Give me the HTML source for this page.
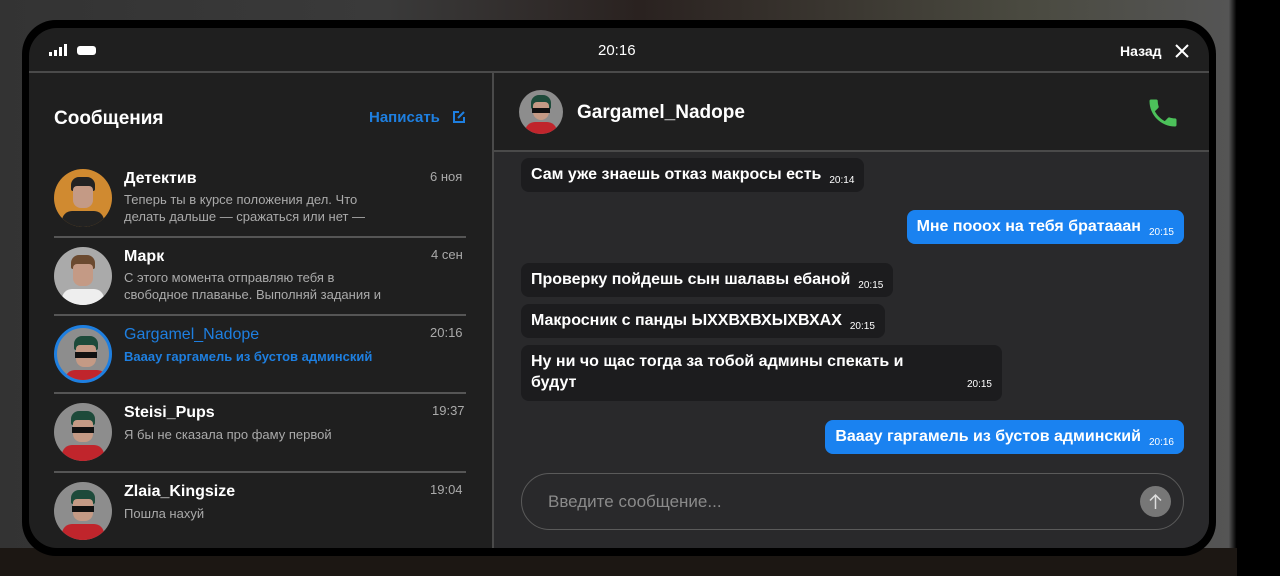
<!DOCTYPE html>
<html><head><meta charset="utf-8"><style>
*{margin:0;padding:0;box-sizing:border-box}
body{width:1280px;height:576px;overflow:hidden;position:relative;font-family:"Liberation Sans","DejaVu Sans",sans-serif;background:#2b2b2b}
.bg{position:absolute;inset:0;background:linear-gradient(90deg,#333 0%,#3a3a3a 30%,#2a2220 50%,#4a4a40 80%,#555 96%,#000 96.6%)}
.bot{position:absolute;left:0;right:43px;top:548px;bottom:0;background:#1c1713}
.frame{position:absolute;left:22px;top:20px;width:1194px;height:536px;background:#000;border-radius:34px}
.screen{position:absolute;left:29px;top:28px;width:1180px;height:520px;background:#1f1f1f;border-radius:28px;overflow:hidden}
.top{position:absolute;left:0;top:0;width:100%;height:45px;border-bottom:2px solid #4a4a4a}
.right{position:absolute;left:463px;top:45px;right:0;bottom:0;background:#29292b;border-left:2px solid #4a4a4a}
.t{position:absolute;white-space:nowrap;color:#fff}
.av{position:absolute;width:58px;height:58px;border-radius:50%;background:#8d8d8d;overflow:hidden}
.av i{position:absolute;left:17px;top:8px;width:24px;height:14px;background:#1d4a3a;border-radius:8px 8px 2px 2px}
.av b{position:absolute;left:19px;top:17px;width:20px;height:22px;background:#c49a85;border-radius:4px 4px 8px 8px}
.av s{position:absolute;left:18px;top:24px;width:22px;height:6px;background:#111}
.av u{position:absolute;left:8px;top:42px;width:42px;height:20px;background:#c0252c;border-radius:10px 10px 0 0}
.sep{position:absolute;left:25px;width:412px;height:2px;background:#555}
.nm{font-size:16px;font-weight:bold}
.pv{font-size:13px;color:#aaa;line-height:17px}
.tm{font-size:13px;color:#aaa}
.b{position:absolute;background:#1c1c1e;border-radius:8px;color:#fff;font-size:16px;font-weight:bold;padding:8px 10px;white-space:nowrap}
.b small{font-size:10px;font-weight:normal;margin-left:8px;position:relative;top:4px}
.me{background:#1a82f0}
</style></head><body>
<div class="bg"></div><div class="bot"></div>
<div class="frame"></div>
<div class="screen">
 <div class="top">
  <svg style="position:absolute;left:20px;top:16px" width="52" height="12"><rect x="0" y="8" width="3" height="4" fill="#fff"/><rect x="5" y="6" width="3" height="6" fill="#fff"/><rect x="10" y="3" width="3" height="9" fill="#fff"/><rect x="15" y="0" width="3" height="12" fill="#fff"/><rect x="28" y="2" width="19" height="9" rx="3" fill="#fff"/></svg>
  <div class="t" style="left:569px;top:14px;font-size:15px">20:16</div>
  <div class="t" style="left:1091px;top:15px;font-size:14px;font-weight:bold">Назад</div>
  <svg style="position:absolute;left:1146px;top:16px" width="14" height="14"><path d="M1 1L13 13M13 1L1 13" stroke="#fff" stroke-width="2"/></svg>
 </div>
 <div class="t" style="left:25px;top:80px;font-size:19px;font-weight:bold">Сообщения</div>
 <div class="t" style="left:340px;top:81px;font-size:15px;font-weight:bold;color:#1e7fe0">Написать</div>
 <svg style="position:absolute;left:423px;top:82px" width="14" height="14"><path d="M7 2H2V12H12V7" stroke="#1e7fe0" stroke-width="2" fill="none"/><path d="M6 8L12 2" stroke="#1e7fe0" stroke-width="2"/></svg>

 <div class="av" style="left:25px;top:141px;background:#d08a30"><i style="background:#222"></i><b></b><u style="background:#222"></u></div>
 <div class="t nm" style="left:95px;top:142px">Детектив</div><div class="t tm" style="left:401px;top:141px">6 ноя</div>
 <div class="t pv" style="left:95px;top:163px">Теперь ты в курсе положения дел. Что<br>делать дальше — сражаться или нет —</div>
 <div class="sep" style="top:208px"></div>
 <div class="av" style="left:25px;top:219px;background:#aaa"><i style="background:#6b4a30"></i><b></b><u style="background:#eee"></u></div>
 <div class="t nm" style="left:95px;top:220px">Марк</div><div class="t tm" style="left:402px;top:219px">4 сен</div>
 <div class="t pv" style="left:95px;top:241px">С этого момента отправляю тебя в<br>свободное плаванье. Выполняй задания и</div>
 <div class="sep" style="top:286px"></div>
 <div class="av" style="left:25px;top:297px;border:3px solid #1e7fe0"><i></i><b></b><s></s><u></u></div>
 <div class="t nm" style="left:95px;top:298px;color:#1e7fe0;font-weight:normal">Gargamel_Nadope</div><div class="t tm" style="left:401px;top:297px">20:16</div>
 <div class="t pv" style="left:95px;top:320px;color:#1e7fe0;font-weight:bold">Ваааy гаргамель из бустов админский</div>
 <div class="sep" style="top:364px"></div>
 <div class="av" style="left:25px;top:375px"><i></i><b></b><s></s><u></u></div>
 <div class="t nm" style="left:95px;top:376px">Steisi_Pups</div><div class="t tm" style="left:403px;top:375px">19:37</div>
 <div class="t pv" style="left:95px;top:398px">Я бы не сказала про фаму первой</div>
 <div class="sep" style="top:443px"></div>
 <div class="av" style="left:25px;top:454px"><i></i><b></b><s></s><u></u></div>
 <div class="t nm" style="left:95px;top:455px">Zlaia_Kingsize</div><div class="t tm" style="left:401px;top:454px">19:04</div>
 <div class="t pv" style="left:95px;top:477px">Пошла нахуй</div>

 <div class="right">
  <div style="position:absolute;left:0;right:0;top:0;height:79px;background:#1f1f1f;border-bottom:2px solid #4a4a4a"></div>
  <div class="av" style="left:25px;top:17px;width:44px;height:44px;"><i style="left:12px;top:5px;width:20px"></i><b style="left:14px;top:12px;width:16px;height:18px"></b><s style="left:13px;top:18px;width:18px;height:5px"></s><u style="left:6px;top:32px;width:32px"></u></div>
  <div class="t" style="left:83px;top:29px;font-size:19px;font-weight:bold">Gargamel_Nadope</div>
  <svg style="position:absolute;left:651px;top:22px" width="36" height="36" viewBox="0 0 24 24"><path d="M6.6 10.8c1.4 2.8 3.8 5.1 6.6 6.6l2.2-2.2c.3-.3.7-.4 1-.2 1.1.4 2.3.6 3.6.6.6 0 1 .4 1 1V20c0 .6-.4 1-1 1C10.6 21 3 13.4 3 4c0-.6.4-1 1-1h3.5c.6 0 1 .4 1 1 0 1.3.2 2.5.6 3.6.1.3 0 .7-.2 1z" fill="#4cc15a"/></svg>
  <div class="b" style="left:27px;top:85px">Сам уже знаешь отказ макросы есть<small>20:14</small></div>
  <div class="b me" style="right:25px;top:137px">Мне пooox на тебя братааан<small>20:15</small></div>
  <div class="b" style="left:27px;top:190px">Проверку пойдешь сын шалавы ебаной<small>20:15</small></div>
  <div class="b" style="left:27px;top:231px">Макросник с панды ЫХХВХВХЫХВХАХ<small>20:15</small></div>
  <div class="b" style="left:27px;top:272px;width:481px;height:56px;white-space:normal;line-height:21px;padding-top:6px">Ну ни чо щас тогда за тобой админы спекать и<br>будут<small style="position:absolute;right:10px;bottom:6px;top:auto">20:15</small></div>
  <div class="b me" style="right:25px;top:347px">Ваааy гаргамель из бустов админский<small>20:16</small></div>
  <div style="position:absolute;left:27px;right:25px;top:400px;height:57px;border:1px solid #5a5a5a;border-radius:29px"></div>
  <div class="t" style="left:54px;top:419px;font-size:17px;color:#8a8a8a">Введите сообщение...</div>
  <div style="position:absolute;left:646px;top:413px;width:31px;height:31px;border-radius:50%;background:#777"><svg width="31" height="31"><path d="M15.5 23V9M10 14.5L15.5 9L21 14.5" stroke="#ddd" stroke-width="1.5" fill="none"/></svg></div>
 </div>
</div>
</body></html>
